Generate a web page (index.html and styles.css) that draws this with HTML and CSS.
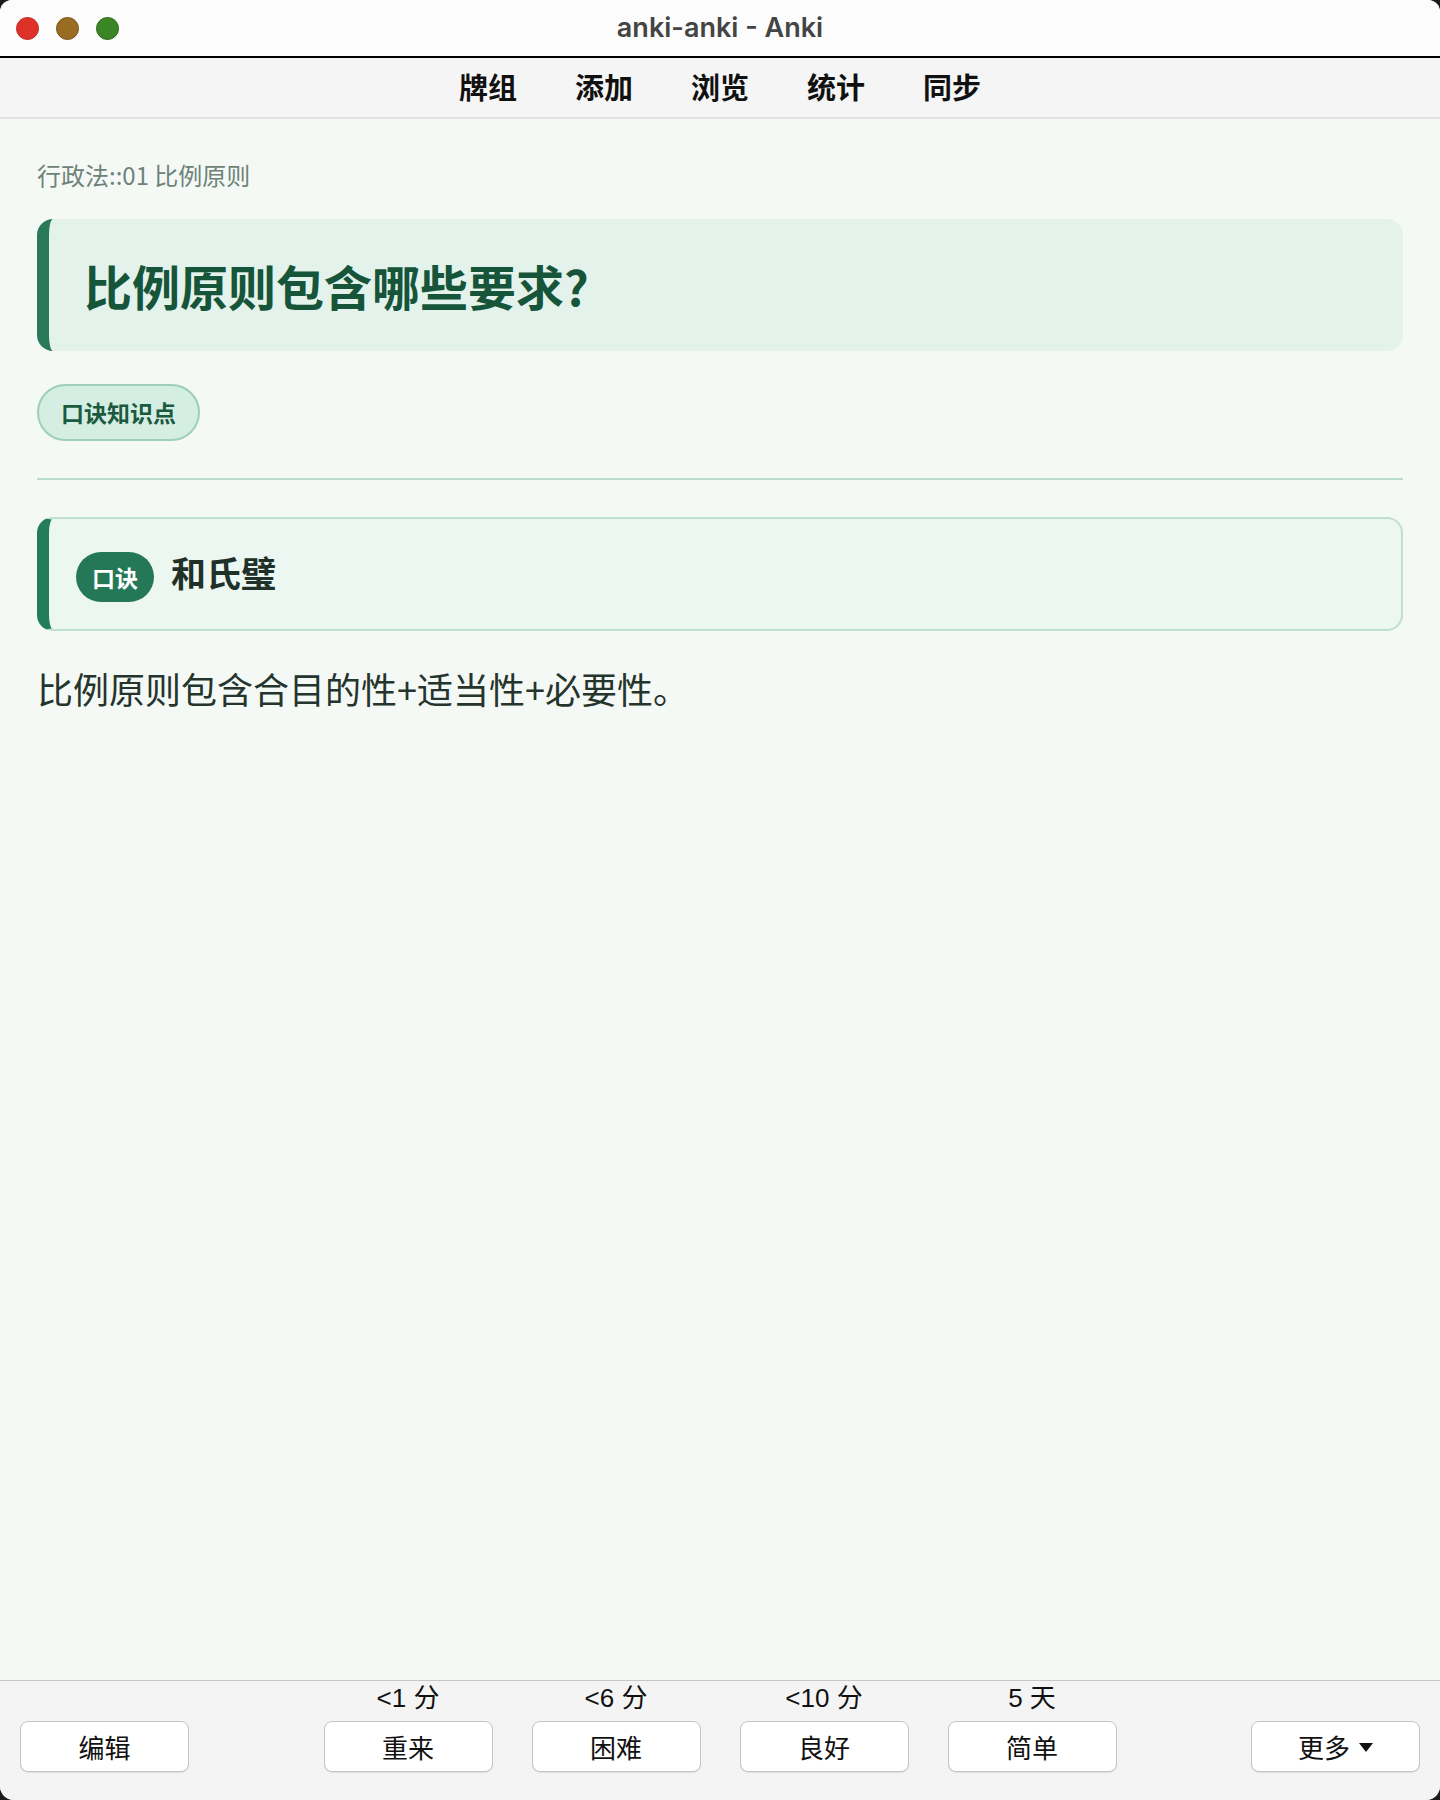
FILE: index.html
```html
<!DOCTYPE html>
<html lang="zh-CN">
<head>
  <meta charset="UTF-8">
  <meta name="viewport" content="width=device-width, initial-scale=1.0">
  <title>anki-anki - Anki</title>
  <link rel="stylesheet" href="styles.css">
</head>
<body>
  <div class="window">
    <header class="titlebar">
      <div class="lights">
        <span class="light red"></span>
        <span class="light yellow"></span>
        <span class="light green"></span>
      </div>
      <div class="title">anki-anki - Anki</div>
      <div></div>
    </header>

    <nav class="toolbar">
      <a href="#">牌组</a>
      <a href="#">添加</a>
      <a href="#">浏览</a>
      <a href="#">统计</a>
      <a href="#">同步</a>
    </nav>

    <main class="card">
      <div class="deck">行政法::01 比例原则</div>
      <div class="question">比例原则包含哪些要求?</div>
      <div class="tags"><span class="tag">口诀知识点</span></div>
      <div class="divider"></div>
      <div class="mnemonic">
        <span class="badge">口诀</span>
        <span class="mnemonic-text">和氏璧</span>
      </div>
      <p class="answer">比例原则包含合目的性+适当性+必要性。</p>
    </main>

    <footer class="reviewbar">
      <div class="side left">
        <button class="btn">编辑</button>
      </div>
      <div class="answers">
        <div class="answer-col">
          <span class="due">&lt;1 分</span>
          <button class="btn">重来</button>
        </div>
        <div class="answer-col">
          <span class="due">&lt;6 分</span>
          <button class="btn">困难</button>
        </div>
        <div class="answer-col">
          <span class="due">&lt;10 分</span>
          <button class="btn">良好</button>
        </div>
        <div class="answer-col">
          <span class="due">5 天</span>
          <button class="btn">简单</button>
        </div>
      </div>
      <div class="side right">
        <button class="btn">更多<svg class="caret" width="14" height="9" viewBox="0 0 14 9"><path d="M0 0 H14 L7 9 Z" fill="#111"/></svg></button>
      </div>
    </footer>
  </div>
</body>
</html>
```

FILE: styles.css
```css
body {
  margin: 0;
  padding: 0;
  background-color: #1c1c1c;
  font-family: "Noto Sans CJK SC", "Liberation Sans", sans-serif;
}

.window {
  width: 1440px;
  height: 1800px;
  display: flex;
  flex-direction: column;
  border-radius: 12px 12px 14px 14px;
  overflow: hidden;
  background-color: #f4f9f6;
}

/* title bar */
.titlebar {
  height: 56px;
  display: grid;
  grid-template-columns: 1fr auto 1fr;
  align-items: center;
  background-color: #fcfcfc;
  border-bottom: 2px solid #000;
}

.lights {
  display: flex;
  gap: 17px;
  padding-left: 16px;
}

.light {
  width: 21px;
  height: 21px;
  border-radius: 50%;
  border: 1px solid transparent;
}

.light.red {
  background-color: #de3127;
  border-color: #c22a20;
}

.light.yellow {
  background-color: #9a6c23;
  border-color: #7b5419;
}

.light.green {
  background-color: #3a8524;
  border-color: #2d6a1b;
}

.title {
  font-family: Inter, "Liberation Sans", sans-serif;
  font-weight: 600;
  font-size: 27px;
  line-height: 54px;
  color: #444;
}

/* toolbar */
.toolbar {
  height: 56px;
  padding-bottom: 3px;
  display: flex;
  justify-content: center;
  align-items: center;
  gap: 58px;
  background-color: #f5f5f5;
  border-bottom: 2px solid #e1e1e1;
}

.toolbar a {
  font-size: 29px;
  font-weight: 700;
  line-height: 56px;
  color: #111;
  text-decoration: none;
}

/* card */
.card {
  flex: 1;
  padding: 40px 37px 0;
  background-color: #f4f9f6;
}

.deck {
  font-size: 24px;
  line-height: 32px;
  color: #6e8279;
}

.question {
  margin-top: 28px;
  height: 132px;
  box-sizing: border-box;
  display: flex;
  align-items: center;
  padding: 0 35px;
  background-color: #e3f2eb;
  border-left: 12px solid #2a7a5a;
  border-radius: 16px;
  font-size: 48px;
  font-weight: 700;
  line-height: 1.3;
  color: #17553b;
}

.tags {
  margin-top: 33px;
}

.tag {
  display: inline-block;
  height: 57px;
  box-sizing: border-box;
  padding: 0 22px;
  border: 2px solid #9dd0b8;
  border-radius: 29px;
  background-color: #d5eee3;
  font-size: 23px;
  font-weight: 700;
  line-height: 53px;
  color: #1b5a3f;
}

.divider {
  margin-top: 37px;
  height: 2px;
  background-color: #b9dccb;
}

.mnemonic {
  margin-top: 37px;
  display: flex;
  align-items: center;
  gap: 17px;
  padding: 33px 27px 27px;
  background-color: #edf7f2;
  border: 2px solid #bde0cf;
  border-left: 12px solid #237d5a;
  border-radius: 16px;
}

.badge {
  height: 50px;
  padding: 0 16px;
  border-radius: 25px;
  background-color: #247858;
  color: #fff;
  font-size: 23px;
  font-weight: 700;
  line-height: 50px;
}

.mnemonic-text {
  font-size: 35px;
  font-weight: 700;
  line-height: 40px;
  padding-bottom: 10px;
  color: #1f3129;
}

.answer {
  margin: 33px 0 0;
  font-size: 36px;
  line-height: 48px;
  color: #26342e;
}

/* review buttons */
.reviewbar {
  display: grid;
  grid-template-columns: 1fr auto 1fr;
  align-items: end;
  padding: 2px 20px 28px;
  background-color: #f4f4f4;
  border-top: 1.5px solid #c6c6c6;
}

.side.right {
  justify-self: end;
}

.answers {
  display: flex;
  gap: 39px;
}

.answer-col {
  display: flex;
  flex-direction: column;
  align-items: center;
  gap: 8px;
}

.due {
  font-family: "Liberation Sans", "Noto Sans CJK SC", sans-serif;
  font-size: 26px;
  line-height: 30px;
  color: #111;
}

.btn {
  display: flex;
  align-items: center;
  justify-content: center;
  width: 169px;
  height: 51px;
  background-color: #fff;
  border: 1.5px solid #c5c5c5;
  border-radius: 8px;
  box-shadow: 0 1px 1px rgba(0, 0, 0, 0.08);
  font-family: "Noto Sans CJK SC", sans-serif;
  font-size: 26px;
  color: #111;
  padding: 0;
}

.caret {
  margin-left: 9px;
  margin-top: 2px;
}
```
